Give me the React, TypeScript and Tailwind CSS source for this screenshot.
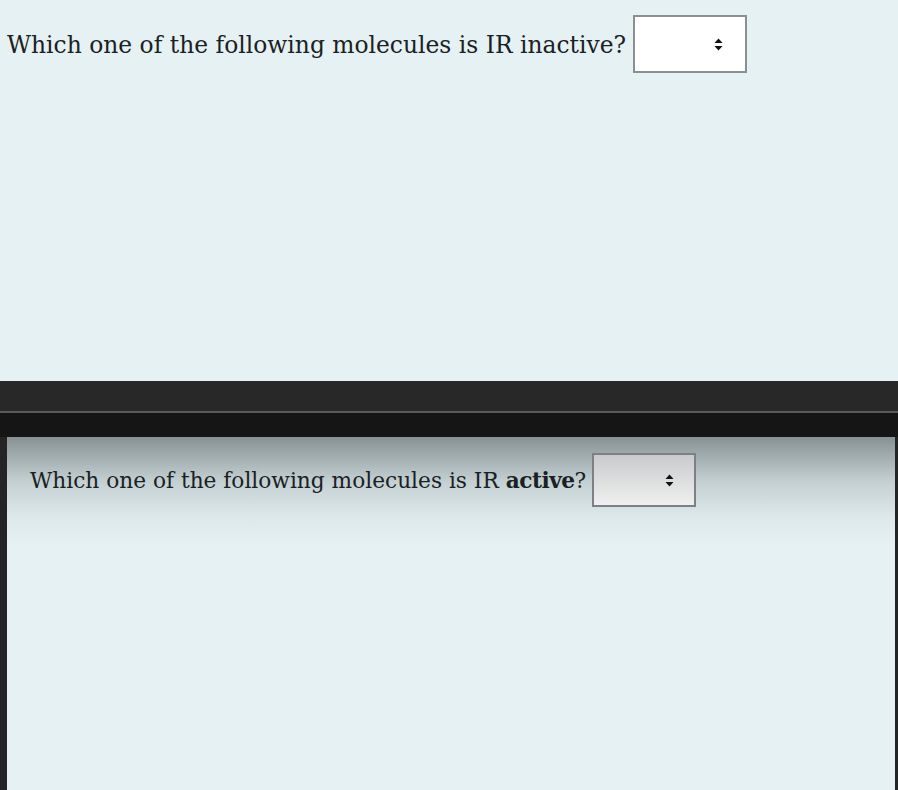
function Arrows() {
    return (
        <svg width="9" height="13" viewBox="0 0 9 13" className="shrink-0">
            <path d="M4.5 0.5 L8.5 5 H0.5 Z" fill="#111" />
            <path d="M4.5 12.5 L8.5 8 H0.5 Z" fill="#111" />
        </svg>
    )
}

function Question({ children, textClass, selectClass }: { children: React.ReactNode; textClass: string; selectClass: string }) {
    return (
        <div className="flex items-center">
            <span className={textClass}>{children}</span>
            <div className={selectClass}>
                <Arrows />
            </div>
        </div>
    )
}

export default function App() {
    return (
        <div className="flex h-[790px] w-[898px] flex-col overflow-hidden bg-[#e6f1f3]">
            <div className="h-[381px] shrink-0 pl-[7px] pt-[15px]">
                <Question
                    textClass="whitespace-nowrap pt-[3px] text-[23.4px] text-[#1a2123] [font-family:'DejaVu_Serif',serif]"
                    selectClass="ml-[7px] flex h-[58px] w-[114px] items-center justify-end border-2 border-[#8a8f94] bg-white pr-[22px]"
                >
                    Which one of the following molecules is IR inactive?
                </Question>
            </div>
            <div className="h-[30px] shrink-0 bg-[#282828]" />
            <div className="h-[2px] shrink-0 bg-[#5a5a5a]" />
            <div className="h-[24px] shrink-0 bg-[#151515]" />
            <div className="flex min-h-0 flex-1 bg-[#242424] pl-[7px] pr-[3px]">
                <div className="flex-1 bg-[linear-gradient(to_bottom,#889294_0px,#c4d0d2_45px,#dde8ea_80px,#e6f1f3_110px)] pl-[23px] pt-[16px]">
                    <Question
                        textClass="whitespace-nowrap pt-[2px] text-[21.7px] text-[#1a2123] [font-family:'DejaVu_Serif',serif]"
                        selectClass="ml-[6px] flex h-[54px] w-[104px] items-center justify-end border-2 border-[#7d8185] bg-[linear-gradient(to_bottom,#c8cacb,#f0f0f0)] pr-[20px]"
                    >
                        Which one of the following molecules is IR <b className="font-bold tracking-[-0.5px]">active</b>?
                    </Question>
                </div>
            </div>
        </div>
    )
}
